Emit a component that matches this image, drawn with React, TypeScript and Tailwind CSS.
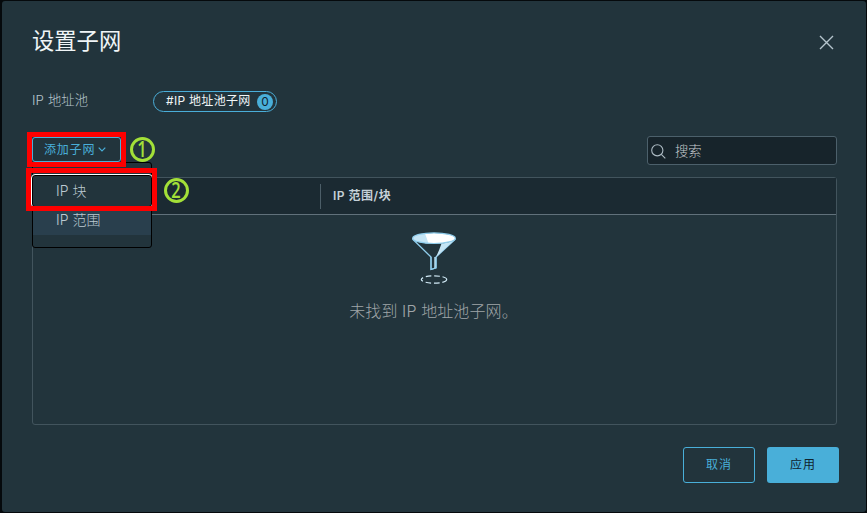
import React from 'react';

function Funnel() {
  return (
    <svg width="46" height="54" viewBox="0 0 46 54" fill="none" className="block">
      <path d="M1.500 8 L20 26 V38.500 L25 36.800 V26 L44.500 8" stroke="#8fcdec" strokeWidth="1.300" strokeLinejoin="round" />
      <path d="M30.500 12.500 Q38 12 44 8.500 L25 26 Q28 20 30.500 12.500 Z" fill="#c5e5f5" />
      <path d="M23.300 26 H25 V36.800 L23.300 37.300 Z" fill="#c5e5f5" />
      <path d="M20 26 V38.500 L25 36.800 V26" stroke="#8fcdec" strokeWidth="1.200" />
      <ellipse cx="23" cy="7.200" rx="21.300" ry="5.300" fill="#fff" />
      <path d="M1.700 7.200 C2 4.500 7 2.800 14 2.400 L17.500 12.200 C8 11.700 2 9.800 1.700 7.200Z" fill="#c5e5f5" />
      <ellipse cx="23" cy="7.200" rx="21.300" ry="5.300" stroke="#8fcdec" strokeWidth="1.200" />
      <ellipse cx="23" cy="48.500" rx="12.700" ry="3.700" stroke="#d3ecf8" strokeWidth="1.200" strokeDasharray="5.500 2.800" />
    </svg>
  );
}

function Step({ n, className }: { n: string; className: string }) {
  return (
    <div className={`absolute z-30 flex size-[25px] items-center justify-center rounded-full border-[3px] border-[#a3e038] font-['Open_Sans',sans-serif] text-[21px] leading-none font-semibold text-[#a3e038] ${className}`}>
      <span className="scale-x-[0.78]">{n}</span>
    </div>
  );
}

export default function App() {
  return (
    <div className="h-[513px] w-[867px] overflow-hidden bg-[#05090c] pt-px pl-[2px] font-['Inter','Noto_Sans_CJK_SC',sans-serif] font-light">
      <div className="relative flex h-[511px] w-[864px] flex-col rounded-[3px] bg-[#22343c] pr-[27px] pl-[30px]">
        <header className="flex h-[83px] shrink-0 items-center justify-between">
          <h1 className="pb-[2px] text-[22.300px] leading-none font-normal text-[#f0f5f7]">设置子网</h1>
          <svg width="15" height="15" viewBox="0 0 15 15" className="mr-[5px] block" stroke="#b5c4cd" strokeWidth="1.400">
            <path d="M1 1 L14 14 M14 1 L1 14" />
          </svg>
        </header>

        <div className="flex h-[35px] shrink-0 items-center">
          <span className="w-[121px] pb-px text-[13.300px] leading-none tracking-[0.100px] text-[#b5c3cb]">IP 地址池</span>
          <div className="flex h-[21px] w-[124px] items-center justify-between rounded-full border border-[#4aaed9] pr-[3px] pl-[12px] text-[12px] leading-none text-[#f0f5f7]">
            <span className="pb-px whitespace-nowrap font-normal tracking-[0.300px]">#IP 地址池子网</span>
            <span className="flex size-[16px] items-center justify-center rounded-full bg-[#49afd9] text-[12px] font-normal text-[#10232e]">0</span>
          </div>
        </div>

        <div className="mt-[17px] flex h-[29px] shrink-0 items-start justify-between">
          <button className="mt-px flex h-[25px] w-[89px] items-center rounded-[3px] border border-[#4aaed9] pl-[11px] text-[12px] leading-none font-normal tracking-[0.800px] text-[#49afd9]">
            添加子网
            <svg width="8" height="5" viewBox="0 0 8 5" className="ml-[3px]" fill="none" stroke="currentColor" strokeWidth="1.200">
              <path d="M0.700 0.700 L4 4 L7.300 0.700" />
            </svg>
          </button>
          <div className="mr-[2px] flex h-[29px] w-[190px] items-center rounded-[3px] border border-[#4c606b] bg-[#17242b] pl-[3px]">
            <svg width="15" height="15" viewBox="0 0 15 15" fill="none" stroke="#acbac3" strokeWidth="1.100" className="mt-px">
              <circle cx="6.300" cy="6.300" r="5.600" />
              <path d="M10.300 10.300 L14.300 14.300" />
            </svg>
            <span className="ml-[9px] pt-[2px] text-[13.300px] leading-none text-[#c8ced1]">搜索</span>
          </div>
        </div>

        <div className="mt-[12px] flex h-[248px] w-[805px] shrink-0 flex-col rounded-[3px] border border-[#42545d]">
          <div className="flex h-[37px] shrink-0 items-center border-b border-[#61717b] bg-[#1b2a32]">
            <div className="h-[25px] w-[288px] border-r border-[#4c5e68]" />
            <span className="ml-[12px] text-[12px] leading-none font-semibold tracking-[0.500px] text-[#c6d1d8]">IP 范围/块</span>
          </div>
          <div className="mr-[2px] flex flex-col items-center pt-[16px]">
            <Funnel />
            <p className="mt-[18px] text-[16px] leading-none tracking-[0.100px] text-[#a0a6a9]">未找到 IP 地址池子网。</p>
          </div>
        </div>

        <footer className="mt-[22px] flex justify-end gap-[12px] text-[12px] leading-none font-normal tracking-[1px]">
          <button className="h-[36px] w-[72px] rounded-[3px] border border-[#49afd9] text-[#49afd9]">取消</button>
          <button className="h-[36px] w-[72px] rounded-[3px] bg-[#49afd9] text-[#10232e]">应用</button>
        </footer>

        <div className="absolute top-[161px] left-[30px] z-10 h-[86px] w-[120px] rounded-[3px] border border-black bg-[#22343c] pt-[12px] text-[14px] leading-none text-[#bccad2]">
          <div className="-mx-px flex h-[32px] items-center rounded-[3px] border border-black pb-px pl-[23px] outline outline-white">IP 块</div>
          <div className="flex h-[28px] items-center bg-[#293f4d] pb-[2px] pl-[23px]">IP 范围</div>
        </div>

        <div className="absolute top-[131px] left-[25px] z-20 h-[35px] w-[99px] border-[5px] border-[#fe0000]" />
        <div className="absolute top-[167px] left-[24px] z-20 h-[43px] w-[131px] border-[5px] border-[#fe0000]" />
        <Step n="1" className="top-[136px] left-[128px]" />
        <Step n="2" className="top-[177px] left-[162px]" />
      </div>
    </div>
  );
}
